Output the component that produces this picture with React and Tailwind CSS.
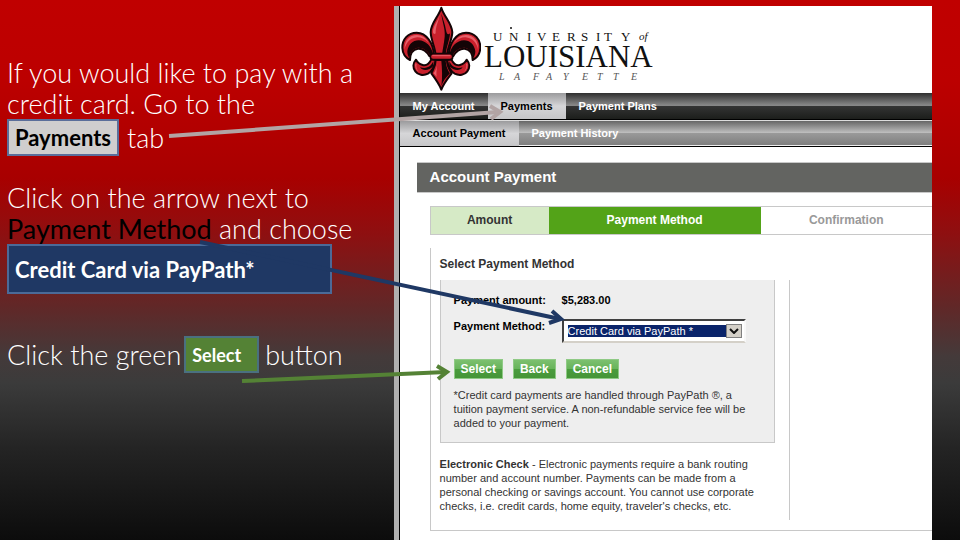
const NAV_TABS = ["My Account", "Payments", "Payment Plans"];
const SUB_TABS = ["Account Payment", "Payment History"];

const FleurLobe = () => (
  <g>
    <path
      d="M114 160 C112 124 92 92 62 92 C36 92 18 112 19 138 C20 156 30 168 42 174 C42 156 50 142 66 140 C80 139 92 148 100 162 Z"
      fill="#c9202c"
      stroke="#140406"
      strokeWidth="6"
      strokeLinejoin="round"
    />
    <path d="M112 158 C106 132 90 116 68 115 C50 115 37 128 34 148 C34 156 36 162 40 168 C42 152 50 139 66 137 C82 136 94 146 102 160 Z" fill="#140406" />
    <path d="M26 142 C24 116 40 99 62 99 C78 99 90 108 98 122 C86 110 76 106 64 106 C42 108 30 122 26 142 Z" fill="#e8606a" />
    <path
      d="M106 172 C100 184 90 192 80 189 C70 186 63 180 60 173 C50 184 50 198 58 208 C66 219 82 222 96 215 C108 208 116 192 120 174 Z"
      fill="#c9202c"
      stroke="#140406"
      strokeWidth="6"
      strokeLinejoin="round"
    />
    <path d="M112 178 C106 192 94 202 72 196 C80 208 100 206 112 192 Z" fill="#140406" />
    <path d="M58 184 C56 194 60 204 68 210 C60 200 60 192 62 186 Z" fill="#e8606a" />
  </g>
);

const FleurDeLis = () => (
  <svg viewBox="15 12 240 258" className="w-20 h-[86px] shrink-0" aria-hidden="true">
    <FleurLobe />
    <g transform="translate(272 0) scale(-1 1)">
      <FleurLobe />
    </g>
    <path
      d="M136 17 C128 44 104 64 104 91 C105 115 117 134 119 160 L153 160 C155 134 168 115 169 91 C168 64 144 44 136 17 Z"
      fill="#c9202c"
      stroke="#140406"
      strokeWidth="6"
      strokeLinejoin="round"
    />
    <path d="M136 34 C138 60 148 78 146 104 C144 126 140 140 138 158 L149 158 C151 134 161 116 162 94 C156 100 152 96 150 84 C147 66 140 50 136 34 Z" fill="#140406" />
    <path d="M131 38 C126 58 110 72 111 91 C112 96 116 98 119 94 C118 74 128 58 131 38 Z" fill="#e8606a" />
    <path
      d="M119 174 C119 194 110 204 106 214 C118 230 130 246 136 263 C142 246 155 230 167 214 C162 204 153 194 153 174 Z"
      fill="#c9202c"
      stroke="#140406"
      strokeWidth="6"
      strokeLinejoin="round"
    />
    <path d="M136 176 L149 176 C150 194 156 206 162 214 C150 226 142 236 136 252 C140 226 138 200 136 176 Z" fill="#140406" />
    <path d="M124 180 C124 196 118 206 113 214 L122 224 C120 206 124 196 124 180 Z" fill="#e8606a" />
    <rect x="103" y="155" width="67" height="18" rx="8" fill="#c9202c" stroke="#140406" strokeWidth="5" />
    <path d="M110 161 H162" stroke="#e8606a" strokeWidth="3" strokeLinecap="round" />
  </svg>
);

const Wordmark = () => (
  <svg viewBox="0 0 176 70" className="w-44 h-[70px] shrink-0" role="img" aria-label="University of Louisiana Lafayette">
    <g fill="#111" className="font-['Liberation_Serif',serif]">
      <text x="10 26 44 54 69 84 98 113 121 138" y="22" fontSize="13">
        UNIVERSITY
      </text>
      <text x="156" y="21" fontSize="11" fontStyle="italic">
        of
      </text>
      <text x="1" y="48" fontSize="31">
        LOUISIANA
      </text>
      <text x="16 31 50 63 80 99 114 130 148" y="61" fontSize="10" fontStyle="italic" fill="#555">
        LAFAYETTE
      </text>
    </g>
    <circle cx="28" cy="9" r="1" fill="#111" />
  </svg>
);

const TabRow = ({ tabs, active, className, idleClass }) => (
  <nav className={className}>
    {tabs.map((tab) => (
      <a
        key={tab}
        href="#"
        className={
          tab === active
            ? "flex items-center px-[13px] text-black bg-linear-to-b from-[#9b9b9d] via-[#d6d6d8] to-[#c6c6c8]"
            : idleClass
        }
      >
        {tab}
      </a>
    ))}
  </nav>
);

const ActionButton = ({ children }) => (
  <button
    type="button"
    className="h-5 px-[6px] text-xs font-bold text-white border border-[#8fca85] bg-[linear-gradient(#7cc06f_0%,#68b45b_48%,#4a9c3d_52%,#459538_100%)]"
  >
    {children}
  </button>
);

const Instructions = () => (
  <section className="w-[41%] shrink-0 pt-[57px] pl-[7px] font-['Lato',sans-serif] font-light text-[27px] leading-[31px] text-white whitespace-nowrap">
    <p>
      If you would like to pay with a
      <br />
      credit card. Go to the
    </p>
    <p className="flex items-center h-[37px]">
      <span className="flex items-center h-[37px] mr-2 px-[6px] border-2 border-[#5b6e9a] bg-[#d0cece] text-[22px] font-bold text-black">
        Payments
      </span>
      tab
    </p>
    <p className="mt-[26px]">
      Click on the arrow next to
      <br />
      <span className="font-normal text-black">Payment Method</span> and choose
    </p>
    <p className="flex items-center w-[325px] h-[50px] px-[6px] border-2 border-[#4b6a98] bg-[#1f3864] text-[22px] font-bold">
      Credit Card via PayPath*
    </p>
    <p className="flex items-center mt-[42px] h-[37px]">
      Click the green
      <span className="flex items-center w-[75px] h-[37px] ml-[3px] mr-[6px] px-[6px] border-2 border-[#4a7080] bg-[#548235] text-lg font-bold">
        Select
      </span>
      button
    </p>
  </section>
);

const PaymentForm = () => (
  <form className="px-[13px] pt-[13px] pb-3 border border-t-0 border-[#c8c8c8] bg-[#eee] text-[11px] leading-[14px]">
    <div className="grid grid-cols-[108px_184px] gap-y-3 font-bold text-black">
      <span>Payment amount:</span>
      <span>$5,283.00</span>
      <label htmlFor="method">Payment Method:</label>
      <div className="relative h-6 p-1 border-2 border-t-[#404040] border-l-[#404040] border-r-[#f8f8f8] border-b-[#d4d0c8] bg-white">
        <select id="method" className="block w-full h-3 appearance-none bg-[#0a246a] text-[11px] leading-3 font-normal text-white">
          <option>Credit Card via PayPath *</option>
        </select>
        <span className="absolute right-[2px] inset-y-[3px] w-4 flex items-center justify-center border border-[#808080] bg-[#d4d0c8] pointer-events-none">
          <svg viewBox="0 0 10 6" className="w-[10px] h-[6px]">
            <path d="M1 1 L5 5 L9 1" fill="none" stroke="#111" strokeWidth="2" />
          </svg>
        </span>
      </div>
    </div>
    <div className="flex gap-[10px] mt-4">
      <ActionButton>Select</ActionButton>
      <ActionButton>Back</ActionButton>
      <ActionButton>Cancel</ActionButton>
    </div>
    <p className="mt-[9px] text-[#333]">
      *Credit card payments are handled through PayPath ®, a<br />
      tuition payment service. A non-refundable service fee will be
      <br />
      added to your payment.
    </p>
  </form>
);

const Arrows = () => (
  <svg className="absolute inset-0 w-full h-full pointer-events-none" fill="none" strokeWidth="4">
    <g stroke="#b2a4a4">
      <path d="M169 136 L498 112" />
      <path d="M490 106 L500 112 L491 119" />
    </g>
    <g stroke="#1f3864">
      <path d="M200 242 L560 319" />
      <path d="M552 311 L561 319 L549 323" />
    </g>
    <g stroke="#548235">
      <path d="M242 381 L446 372" />
      <path d="M437 366 L447 372 L438 379" />
    </g>
  </svg>
);

const App = () => (
  <div className="relative flex min-h-screen overflow-hidden bg-[linear-gradient(#c00000_0%,#bc0000_15%,#a80000_33%,#8f0f10_43%,#602828_57%,#443a3a_66%,#3b3b3b_71%,#242424_83%,#0c0c0c_100%)]">
    <Instructions />

    <main className="flex-1 mt-[6px] mr-7 border-l-5 border-[#b0b0b0] bg-white font-['Liberation_Sans',sans-serif]">
      <div className="h-full border-l border-black">
        <header className="flex items-start gap-0.5 h-[87px] pl-px">
          <FleurDeLis />
          <div className="pt-[13px]">
            <Wordmark />
          </div>
        </header>

        <TabRow
          tabs={NAV_TABS}
          active="Payments"
          className="flex h-[27px] border-b border-black text-[11px] font-bold bg-[linear-gradient(#2f2f2f_0%,#8a8a8a_48%,#343434_50%,#1c1e1b_100%)]"
          idleClass="flex items-center px-[13px] text-white"
        />
        <TabRow
          tabs={SUB_TABS}
          active="Account Payment"
          className="flex h-[27px] border-t border-t-[#ddd] border-b border-b-black text-[11px] font-bold bg-[linear-gradient(#666_0%,#c0c0c0_48%,#999_50%,#808080_94%,#eee_97%)]"
          idleClass="flex items-center px-[13px] text-white"
        />

        <div className="pl-[17px] pt-[15px]">
          <h1 className="flex items-center h-[31px] pl-[13px] border-y border-[#c8c8c8] bg-[#636461] text-[15px] font-bold text-white">
            Account Payment
          </h1>

          <div className="pl-[13px] pt-[13px]">
            <ol className="grid grid-cols-[118px_212px_1fr] h-[29px] border border-r-0 border-[#c8c8c8] text-xs font-bold text-center leading-[27px]">
              <li className="bg-[#d6eac6] text-[#333]">Amount</li>
              <li className="bg-[#53a318] text-white">Payment Method</li>
              <li className="text-[#999]">Confirmation</li>
            </ol>

            <div className="mt-[13px] pl-[9px] pb-[10px] border-l border-b border-[#c8c8c8]">
              <h2 className="h-8 pt-2 text-xs font-bold text-[#333]">Select Payment Method</h2>
              <div className="w-[350px] pr-[14px] pb-[7px] border-r border-[#c8c8c8]">
                <PaymentForm />
                <p className="mt-[14px] -mr-3 text-[11px] leading-[14px] text-[#333]">
                  <b>Electronic Check</b> - Electronic payments require a bank routing
                  <br />
                  number and account number. Payments can be made from a<br />
                  personal checking or savings account. You cannot use corporate
                  <br />
                  checks, i.e. credit cards, home equity, traveler's checks, etc.
                </p>
              </div>
            </div>
          </div>
        </div>
      </div>
    </main>

    <Arrows />
  </div>
);

export default App;
